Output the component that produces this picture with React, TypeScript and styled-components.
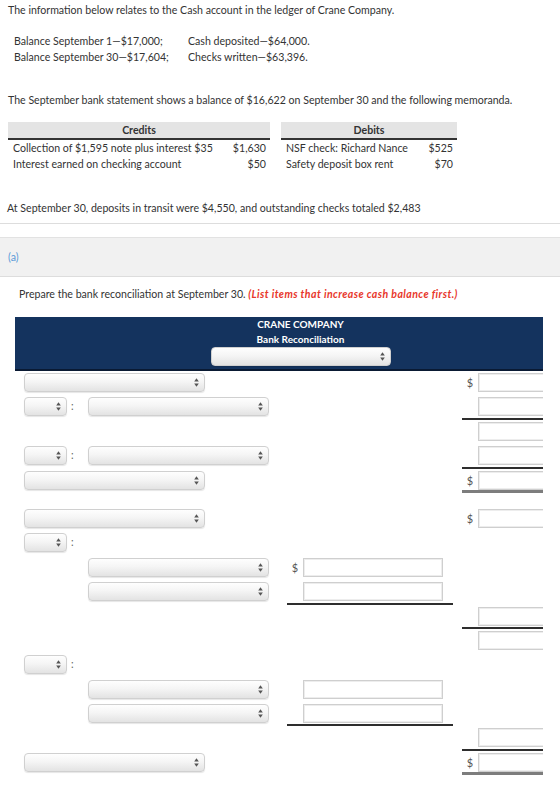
import React from "react";
import styled, { createGlobalStyle } from "styled-components";

const Global = createGlobalStyle`
  html, body { margin: 0; padding: 0; background: #ffffff; }
  body {
    font-family: Lato, "Open Sans", "Liberation Sans", sans-serif;
    font-size: 10.6px;
    color: #333333;
  }
`;

const Page = styled.div`
  width: 560px;
  padding-top: 2px;
`;

const Para = styled.p<{ $top?: number; $left?: number }>`
  margin: ${(p) => p.$top ?? 0}px 0 0 ${(p) => p.$left ?? 8}px;
  line-height: 16px;
`;

const Balances = styled.div`
  margin: 15px 0 0 14px;
  display: grid;
  grid-template-columns: 174px auto;
  line-height: 16px;
`;

/* Credits / debits memoranda */
const Memo = styled.div`
  margin: 14px 0 0 8px;
  width: 449px;
  display: grid;
  grid-template-columns: 217px 45px 11px 139px 37px;
  line-height: 16px;
`;

const MemoHead = styled.div<{ $col: string }>`
  grid-column: ${(p) => p.$col};
  background: #e4e4e4;
  border-bottom: 2px solid #333333;
  line-height: 16px;
  text-align: center;
  font-weight: 700;
`;

const MemoCell = styled.div<{ $col: number; $amount?: boolean }>`
  grid-column: ${(p) => p.$col};
  padding: ${(p) => (p.$amount ? "0 4px 0 0" : "0 0 0 5px")};
  text-align: ${(p) => (p.$amount ? "right" : "left")};
  white-space: nowrap;
`;

const Rule = styled.div`
  margin-top: 7px;
  height: 0;
  border-top: 1.5px solid #dddddd;
`;

const PartBand = styled.div`
  margin-top: 13px;
  height: 40px;
  box-sizing: border-box;
  background: #f1f1f1;
  border-top: 1px solid #e2e2e2;
  border-bottom: 1.5px solid #dddddd;
  display: flex;
  align-items: center;
  padding-left: 8px;
  color: #5a9ad8;
`;

const Emphasis = styled.span`
  color: #e8372c;
  font-weight: 700;
  font-style: italic;
  letter-spacing: 0.4px;
`;

/* Bank reconciliation worksheet */
const Sheet = styled.div`
  margin: 15px 0 0 15px;
  width: 528px;
  overflow: hidden;
`;

const SheetInner = styled.div`
  width: 571px;
  padding-bottom: 20px;
`;

const Banner = styled.div`
  background: #14335e;
  border-bottom: 2px solid #0a1a33;
  height: 52px;
  display: flex;
  flex-direction: column;
  align-items: center;
  color: #ffffff;
  font-weight: 700;
  font-size: 10px;
  line-height: 14.5px;
`;

const Line = styled.div<{ $spaceAfter?: boolean }>`
  display: flex;
  height: 24.4px;
  margin-bottom: ${(p) => (p.$spaceAfter ? "14px" : "0")};
`;

const LabelCell = styled.div<{ $indent?: boolean }>`
  width: 272px;
  flex: none;
  box-sizing: border-box;
  padding: 2px 0 0 ${(p) => (p.$indent ? 73 : 9)}px;
  display: flex;
  align-items: flex-start;
`;

type RuleKind = "single" | "double" | undefined;

const AmountCell = styled.div<{ $wide?: boolean; $rule?: RuleKind }>`
  width: ${(p) => (p.$wide ? 166 : 124)}px;
  margin-left: ${(p) => (p.$wide ? 0 : 9)}px;
  flex: none;
  box-sizing: border-box;
  height: 100%;
  padding-top: 2px;
  display: flex;
  align-items: flex-start;
  border-bottom: ${(p) =>
    p.$rule === "single"
      ? "2px solid #2e2e2e"
      : p.$rule === "double"
      ? "3px solid #7d7d7d"
      : "none"};
`;

const Dollar = styled.span`
  width: 16px;
  flex: none;
  text-align: center;
  line-height: 19px;
  font-size: 11px;
  color: #555555;
`;

const Field = styled.input<{ $wide?: boolean }>`
  width: ${(p) => (p.$wide ? 140 : 108)}px;
  height: 19px;
  box-sizing: border-box;
  margin: 0;
  padding: 0 4px;
  border: 1px solid #cfcfcf;
  box-shadow: inset 0 0 0 1px #ededed;
  background: #ffffff;
  font: inherit;
  outline: none;
`;

const SelectBox = styled.div<{ $size: "s" | "m" }>`
  width: ${(p) => (p.$size === "s" ? 43 : 181)}px;
  height: 19px;
  box-sizing: border-box;
  flex: none;
  border: 1px solid #d0d0d0;
  border-radius: 4px;
  background: linear-gradient(#fefefe 0%, #f5f5f5 45%, #e3e3e3 100%);
  box-shadow: 0 1px 1px rgba(0, 0, 0, 0.1);
  display: flex;
  align-items: center;
  justify-content: flex-end;
  padding-right: 5px;
  cursor: default;
`;

const BannerSelect = styled(SelectBox)`
  margin-top: 1px;
  width: 180px;
`;

const Colon = styled.span`
  width: 21px;
  flex: none;
  box-sizing: border-box;
  padding-left: 4px;
  line-height: 19px;
  color: #666666;
`;

const Arrows = () => (
  <svg width="5" height="9" viewBox="0 0 5 9" aria-hidden="true">
    <path d="M2.5 0.3 L4.8 3.6 H0.2 Z" fill="#555" />
    <path d="M0.2 5.4 H4.8 L2.5 8.7 Z" fill="#555" />
  </svg>
);

const Select = ({ size = "m" }: { size?: "s" | "m" }) => (
  <SelectBox $size={size} role="combobox">
    <Arrows />
  </SelectBox>
);

type Label = "wide" | "pair" | "small" | "indent" | "none";

const LabelPart = ({ kind }: { kind: Label }) => {
  if (kind === "wide")
    return (
      <LabelCell>
        <Select />
      </LabelCell>
    );
  if (kind === "pair")
    return (
      <LabelCell>
        <Select size="s" />
        <Colon>:</Colon>
        <Select />
      </LabelCell>
    );
  if (kind === "small")
    return (
      <LabelCell>
        <Select size="s" />
        <Colon>:</Colon>
      </LabelCell>
    );
  if (kind === "indent")
    return (
      <LabelCell $indent>
        <Select />
      </LabelCell>
    );
  return <LabelCell />;
};

type Amount = { dollar?: boolean; rule?: RuleKind } | null;

const AmountPart = ({ wide, amount }: { wide?: boolean; amount: Amount }) => (
  <AmountCell $wide={wide} $rule={amount?.rule}>
    {amount && (
      <>
        <Dollar>{amount.dollar ? "$" : ""}</Dollar>
        <Field $wide={wide} type="text" />
      </>
    )}
  </AmountCell>
);

type Row = { label: Label; mid: Amount; right: Amount; space?: boolean };

const rows: Row[] = [
  { label: "wide", mid: null, right: { dollar: true } },
  { label: "pair", mid: null, right: { rule: "single" } },
  { label: "none", mid: null, right: {} },
  { label: "pair", mid: null, right: { rule: "single" } },
  { label: "wide", mid: null, right: { dollar: true, rule: "double" }, space: true },
  { label: "wide", mid: null, right: { dollar: true } },
  { label: "small", mid: null, right: null },
  { label: "indent", mid: { dollar: true }, right: null },
  { label: "indent", mid: { rule: "single" }, right: null },
  { label: "none", mid: null, right: { rule: "single" } },
  { label: "none", mid: null, right: {} },
  { label: "small", mid: null, right: null },
  { label: "indent", mid: {}, right: null },
  { label: "indent", mid: { rule: "single" }, right: null },
  { label: "none", mid: null, right: { rule: "single" } },
  { label: "wide", mid: null, right: { dollar: true, rule: "double" } },
];

export default function App() {
  return (
    <Page>
      <Global />
      <Para>
        The information below relates to the Cash account in the ledger of Crane Company.
      </Para>
      <Balances>
        <span>Balance September 1—$17,000;</span>
        <span>Cash deposited—$64,000.</span>
        <span>Balance September 30—$17,604;</span>
        <span>Checks written—$63,396.</span>
      </Balances>
      <Para $top={27}>
        The September bank statement shows a balance of $16,622 on September 30 and the
        following memoranda.
      </Para>
      <Memo>
        <MemoHead $col="1 / 3">Credits</MemoHead>
        <MemoHead $col="4 / 6">Debits</MemoHead>
        <MemoCell $col={1}>Collection of $1,595 note plus interest $35</MemoCell>
        <MemoCell $col={2} $amount>$1,630</MemoCell>
        <MemoCell $col={4}>NSF check: Richard Nance</MemoCell>
        <MemoCell $col={5} $amount>$525</MemoCell>
        <MemoCell $col={1}>Interest earned on checking account</MemoCell>
        <MemoCell $col={2} $amount>$50</MemoCell>
        <MemoCell $col={4}>Safety deposit box rent</MemoCell>
        <MemoCell $col={5} $amount>$70</MemoCell>
      </Memo>
      <Para $top={28} $left={7}>
        At September 30, deposits in transit were $4,550, and outstanding checks totaled $2,483
      </Para>
      <Rule />
      <PartBand>(a)</PartBand>
      <Para $top={9} $left={19}>
        Prepare the bank reconciliation at September 30.{" "}
        <Emphasis>(List items that increase cash balance first.)</Emphasis>
      </Para>
      <Sheet>
        <SheetInner>
          <Banner>
            <span>CRANE COMPANY</span>
            <span>Bank Reconciliation</span>
            <BannerSelect $size="m" role="combobox">
              <Arrows />
            </BannerSelect>
          </Banner>
          {rows.map((r, i) => (
            <Line key={i} $spaceAfter={r.space}>
              <LabelPart kind={r.label} />
              <AmountPart wide amount={r.mid} />
              <AmountPart amount={r.right} />
            </Line>
          ))}
        </SheetInner>
      </Sheet>
    </Page>
  );
}
